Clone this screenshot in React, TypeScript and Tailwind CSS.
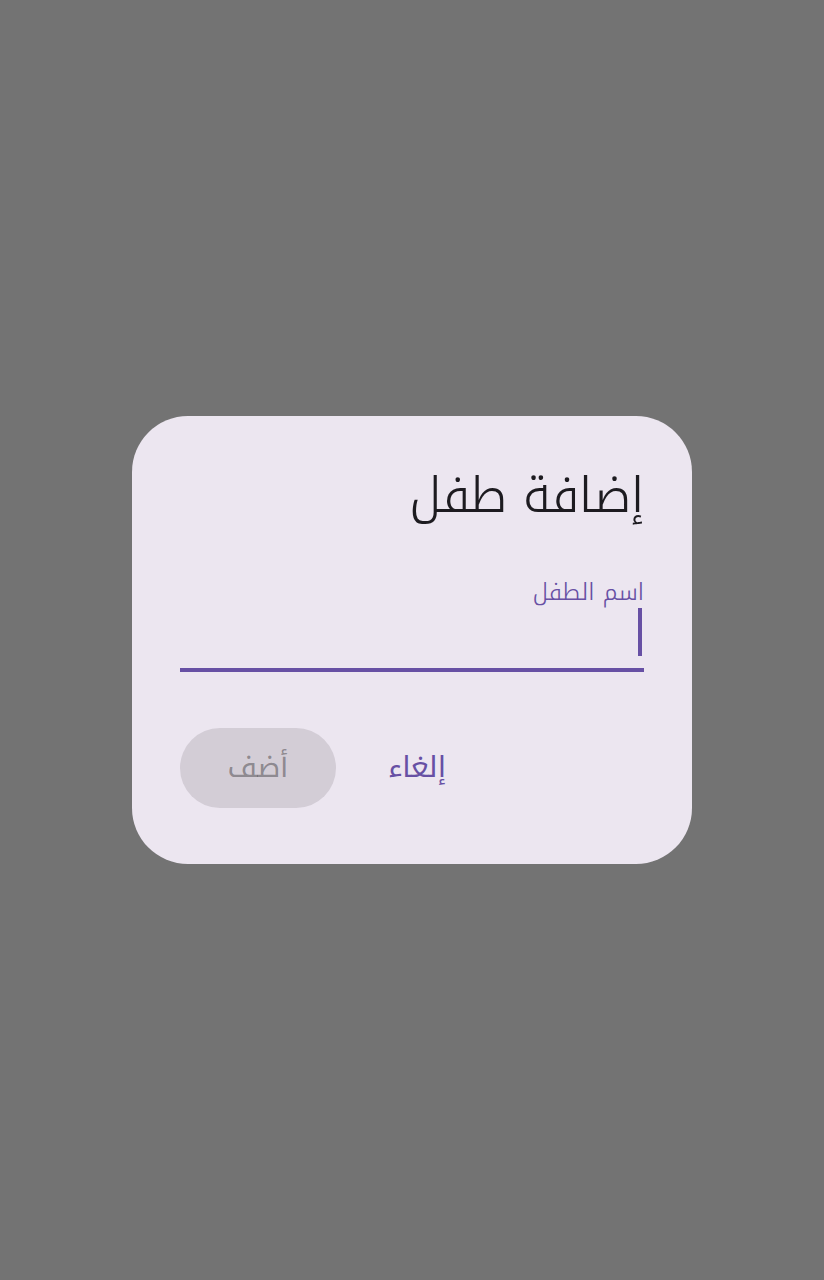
import React from "react";

export default function App() {
  return (
    <div className="w-[824px] h-[1280px] bg-[#737373] flex items-center justify-center font-['Noto_Kufi_Arabic','Noto_Sans_Arabic',sans-serif]">
      <div dir="rtl" className="w-[560px] bg-[#ECE6F0] rounded-[56px] p-[48px] flex flex-col">
        <h1 className="text-[49px] leading-[64px] text-[#1D1B20] font-light">إضافة طفل</h1>
        <div className="mt-[32px] h-[112px] flex flex-col border-b-[4px] border-[#6750A4]">
          <div className="mt-[16px] text-[23.5px] leading-[32px] text-[#6750A4] font-light">اسم الطفل</div>
          <div className="h-[48px] flex items-center">
            <div className="w-[4px] h-[48px] bg-[#6750A4] mr-[2px]" />
          </div>
        </div>
        <div className="mt-[48px] h-[96px] flex justify-end items-center gap-[28px]">
          <button className="h-[80px] px-[24px] text-[29px] leading-[40px] text-[#6750A4] font-normal rounded-full">إلغاء</button>
          <button disabled className="h-[80px] w-[156px] text-[29px] leading-[40px] text-[#1D1B20]/40 bg-[#1D1B20]/12 font-normal rounded-full">أضف</button>
        </div>
      </div>
    </div>
  );
}
